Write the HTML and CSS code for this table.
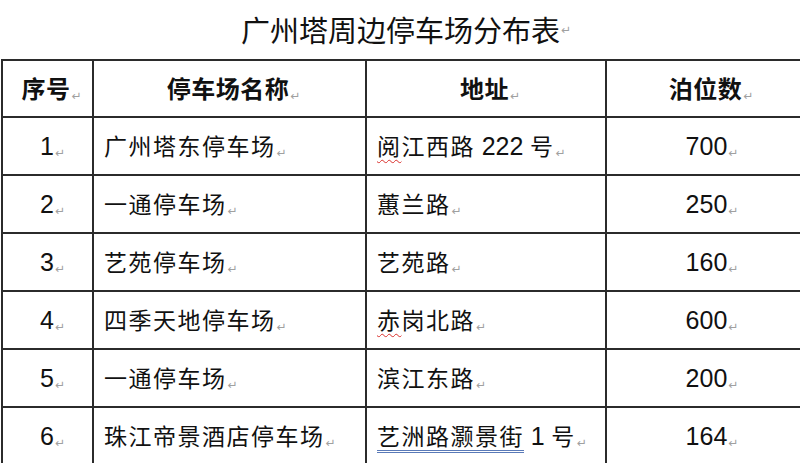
FILE: index.html
```html
<!DOCTYPE html>
<html lang="zh-CN">
<head>
<meta charset="utf-8">
<title>广州塔周边停车场分布表</title>
<link rel="stylesheet" href="styles.css">
</head>
<body>
<div class="page">
  <h1 class="title">广州塔周边停车场分布表<span class="pm">↵</span></h1>
  <table class="lots">
    <colgroup>
      <col class="c-no">
      <col class="c-name">
      <col class="c-addr">
      <col class="c-cnt">
    </colgroup>
    <thead>
      <tr>
        <th>序号<span class="pm">↵</span></th>
        <th>停车场名称<span class="pm">↵</span></th>
        <th>地址<span class="pm">↵</span></th>
        <th>泊位数<span class="pm">↵</span></th>
      </tr>
    </thead>
    <tbody>
      <tr>
        <td class="num">1<span class="pm">↵</span></td>
        <td class="txt">广州塔东停车场<span class="pm">↵</span></td>
        <td class="txt"><span class="spell">阅</span>江西路 <span class="digits">222</span> 号<span class="pm">↵</span></td>
        <td class="num">700<span class="pm">↵</span></td>
      </tr>
      <tr>
        <td class="num">2<span class="pm">↵</span></td>
        <td class="txt">一通停车场<span class="pm">↵</span></td>
        <td class="txt">蕙兰路<span class="pm">↵</span></td>
        <td class="num">250<span class="pm">↵</span></td>
      </tr>
      <tr>
        <td class="num">3<span class="pm">↵</span></td>
        <td class="txt">艺苑停车场<span class="pm">↵</span></td>
        <td class="txt">艺苑路<span class="pm">↵</span></td>
        <td class="num">160<span class="pm">↵</span></td>
      </tr>
      <tr>
        <td class="num">4<span class="pm">↵</span></td>
        <td class="txt">四季天地停车场<span class="pm">↵</span></td>
        <td class="txt"><span class="spell">赤</span>岗北路<span class="pm">↵</span></td>
        <td class="num">600<span class="pm">↵</span></td>
      </tr>
      <tr>
        <td class="num">5<span class="pm">↵</span></td>
        <td class="txt">一通停车场<span class="pm">↵</span></td>
        <td class="txt">滨江东路<span class="pm">↵</span></td>
        <td class="num">200<span class="pm">↵</span></td>
      </tr>
      <tr>
        <td class="num">6<span class="pm">↵</span></td>
        <td class="txt">珠江帝景酒店停车场<span class="pm">↵</span></td>
        <td class="txt"><span class="grammar">艺洲路灏景街</span> <span class="digits">1</span> 号<span class="pm">↵</span></td>
        <td class="num">164<span class="pm">↵</span></td>
      </tr>
    </tbody>
  </table>
</div>
</body>
</html>
```
FILE: styles.css
```css
html, body {
  margin: 0;
  padding: 0;
  background: #fff;
  overflow: hidden;
}

.page {
  width: 806px;
  color: #111;
  font-family: "Noto Sans CJK SC", "Liberation Sans", sans-serif;
}

.title {
  margin: 0;
  height: 59px;
  display: flex;
  align-items: center;
  justify-content: center;
  padding-left: 6px;
  box-sizing: border-box;
  font-size: 29px;
  font-weight: 400;
  line-height: 1;
  color: #111;
}

.pm {
  font-family: "DejaVu Sans", sans-serif;
  font-size: 12px;
  font-weight: 400;
  color: #a0a0a0;
  letter-spacing: 0;
  vertical-align: -2px;
  margin-left: 1px;
}

.lots {
  border-collapse: collapse;
  table-layout: fixed;
  width: 806px;
  margin-left: 1px;
}

.c-no { width: 91px; }
.c-name { width: 273px; }
.c-addr { width: 240px; }
.c-cnt { width: 202px; }

.lots th,
.lots td {
  border: 2px solid #2b2b2b;
  height: 58px;
  box-sizing: border-box;
  padding: 0;
  vertical-align: middle;
  white-space: nowrap;
  line-height: 1;
}

.lots thead th {
  height: 57px;
  font-size: 24px;
  font-weight: 700;
  text-align: center;
  padding-left: 8px;
  letter-spacing: 0.5px;
}

.lots td.num {
  font-family: "Liberation Sans", Arial, sans-serif;
  font-size: 25px;
  text-align: center;
  padding-left: 10px;
}

.lots td.txt {
  font-size: 23px;
  letter-spacing: 1.5px;
  padding-left: 10px;
}

.digits {
  font-family: "Liberation Sans", Arial, sans-serif;
  font-size: 25px;
  letter-spacing: 0;
}

.spell {
  text-decoration: underline wavy #d9302c;
  text-decoration-thickness: 1px;
  text-underline-offset: 4px;
}

.grammar {
  text-decoration: underline double #5a7ab8;
  text-decoration-thickness: 1px;
  text-underline-offset: 5px;
}
```
